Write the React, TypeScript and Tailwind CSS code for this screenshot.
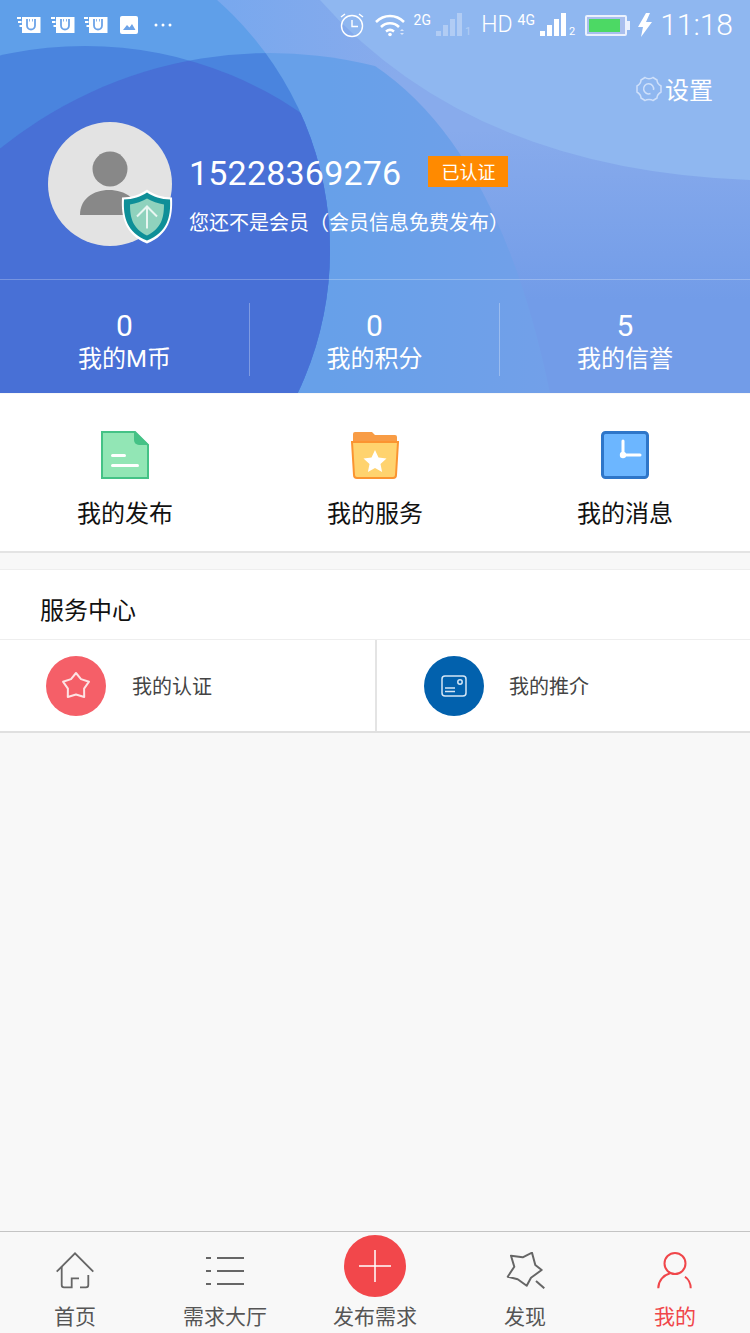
import React from "react";

const cjk = { fontFamily: '"Noto Sans CJK SC", "Noto Sans", sans-serif' };
const rb = { fontFamily: 'Roboto, "Noto Sans CJK SC", sans-serif' };
const bPath = "M-50 196 A430 430 0 0 1 375 66 Q 500 150 550 393 H-50 Z";

function HeaderBg() {
  return (
    <svg className="absolute inset-0" width="750" height="393" viewBox="0 0 750 393">
      <defs>
        <clipPath id="a"><circle cx="-3" cy="250" r="333" /></clipPath>
        <clipPath id="c"><circle cx="85" cy="428" r="382" /></clipPath>
        <linearGradient id="base" x1="0" y1="130" x2="0" y2="300" gradientUnits="userSpaceOnUse">
          <stop offset="0" stopColor="#88abec" />
          <stop offset="1" stopColor="#729ce8" />
        </linearGradient>
        <linearGradient id="band" x1="220" y1="0" x2="400" y2="0" gradientUnits="userSpaceOnUse">
          <stop offset="0" stopColor="#78a8ee" />
          <stop offset="1" stopColor="#88abec" />
        </linearGradient>
        <linearGradient id="bb" x1="330" y1="0" x2="550" y2="0" gradientUnits="userSpaceOnUse">
          <stop offset="0" stopColor="#67a0e9" />
          <stop offset="1" stopColor="#72a0e9" />
        </linearGradient>
      </defs>
      <rect width="750" height="393" fill="url(#base)" />
      <rect x="200" y="0" width="220" height="131" fill="url(#band)" />
      <path d="M320 0 Q 470 170 750 180 V0 Z" fill="#8fb7f0" />
      <path d={bPath} fill="url(#bb)" />
      <circle cx="-3" cy="250" r="333" fill="#5f9fe9" />
      <g clipPath="url(#a)">
        <circle cx="85" cy="428" r="382" fill="#4a84de" />
        <path d={bPath} fill="#4a84de" />
        <g clipPath="url(#c)">
          <path d={bPath} fill="#4870d6" />
        </g>
      </g>
    </svg>
  );
}

function Magnet() {
  return (
    <svg width="24" height="18" viewBox="0 0 24 18">
      <path d="M5 1h18.500v16H5z" fill="#fff" />
      <path d="M0 1h4v2H0zM1 5h3.500v2H1zM2.500 9h2.500v2H2.500z" fill="#fff" />
      <path d="M10 3v6.500a4 4 0 0 0 8 0V3" fill="none" stroke="#6ca3e8" strokeWidth="1.800" />
      <path d="M12.500 3v2.500M15.500 3v2.500" fill="none" stroke="#6ca3e8" strokeWidth="0.800" />
    </svg>
  );
}

function Bars({ n, dim }: { n: string; dim?: boolean }) {
  return (
    <div className={`flex items-end h-[24px] gap-[1px] ${dim ? "opacity-30" : ""}`}>
      <svg width="27" height="24" viewBox="0 0 27 24" fill="#fff">
        <rect x="0" y="18" width="5" height="5" />
        <rect x="7" y="12" width="5" height="11" />
        <rect x="14" y="6" width="5" height="17" />
        <rect x="21" y="0" width="5" height="23" />
      </svg>
      <span className="text-[11px] leading-[11px] text-white ml-[1px]" style={rb}>{n}</span>
    </div>
  );
}

function StatusBar() {
  return (
    <div className="h-[50px] flex items-center justify-between pl-[17px] pr-[17px] text-white relative" style={rb}>
      <div className="flex items-center">
        <div className="flex items-center gap-[9.500px]"><Magnet /><Magnet /><Magnet /></div>
        <svg className="ml-[12px]" width="18" height="18" viewBox="0 0 18 18">
          <rect width="18" height="18" rx="2" fill="#fff" />
          <path d="M3 14l4-5 2.500 2.500L12 8l3.500 6z" fill="#6ca3e8" />
        </svg>
        <svg className="ml-[16px]" width="18" height="4" viewBox="0 0 18 4" fill="#fff">
          <circle cx="2" cy="2" r="1.500" /><circle cx="9" cy="2" r="1.500" /><circle cx="16" cy="2" r="1.500" />
        </svg>
      </div>
      <div className="flex items-center">
        <svg width="24" height="26" viewBox="0 0 24 26" fill="none" stroke="#fff" strokeWidth="1.400">
          <circle cx="12" cy="14" r="10.500" />
          <path d="M12 8v6.500h6" />
          <path d="M1 5l4-3M23 5l-4-3" />
        </svg>
        <svg className="ml-[11px]" width="32" height="24" viewBox="0 0 32 24" fill="none" stroke="#fff" strokeWidth="2.500">
          <path d="M1 9c8-8 20-8 28 0" />
          <path d="M6 14c5-5 13-5 18 0" />
          <path d="M11 18.500c2.500-2 5.500-2 8 0" />
          <circle cx="15" cy="21.500" r="1.800" fill="#fff" stroke="none" />
          <path d="M25 18l2-2 2 2zM25 20l2 2 2-2z" fill="#dbe6fa" stroke="none" />
        </svg>
        <span className="ml-[7px] self-start mt-[4px] text-[14px] leading-[14px]">2G</span>
        <div className="ml-[5px]"><Bars n="1" dim /></div>
        <span className="ml-[10px] text-[23px] leading-[24px] font-light">HD</span>
        <span className="ml-[5px] self-start mt-[4px] text-[14px] leading-[14px]">4G</span>
        <div className="ml-[5px]"><Bars n="2" /></div>
        <div className="ml-[10px] flex items-center">
          <div className="w-[42px] h-[21px] border-2 border-[#eaf1fd] rounded-[2px] p-[2px] bg-[#a9bfee]">
            <div className="w-[31px] h-full bg-[#4cd964]" />
          </div>
          <div className="w-[3px] h-[9px] bg-[#eaf1fd]" />
        </div>
        <svg className="ml-[8px]" width="14" height="24" viewBox="0 0 14 24" fill="#fff">
          <path d="M8 0L0 14h5l-2 10 11-15H8l4-9z" />
        </svg>
        <span className="ml-[8px] text-[30px] leading-[32px] font-light">11:18</span>
      </div>
    </div>
  );
}

function Avatar() {
  return (
    <div className="relative w-[124px] h-[124px] shrink-0 rounded-full bg-[#e3e3e3]">
      <svg className="absolute left-[31px] top-[29px]" width="60" height="65" viewBox="0 0 60 65" fill="#888">
        <circle cx="31" cy="18" r="17.500" />
        <path d="M1 64c0-16 13-25 29-25s30 9 30 25z" />
      </svg>
      <svg className="absolute left-[73px] top-[66px]" width="52" height="57" viewBox="0 0 52 56">
        <path d="M26 1c6 5 16 8 25 8 1 20-3 37-25 46C4 46 0 29 1 9c9 0 19-3 25-8z" fill="#fff" />
        <path d="M26 4c6 4 14 7 23 7 1 18-3 33-23 41C6 44 2 29 3 11c9 0 17-3 23-7z" fill="#0e8f98" />
        <path d="M26 10c5 3 11 5 17 6 0 14-3 24-17 31-14-7-17-17-17-31 6-1 12-3 17-6z" fill="#8fd2bd" />
        <path d="M16 28l10-10 10 10M26 19v21" fill="none" stroke="#e8f6f1" strokeWidth="2" />
      </svg>
    </div>
  );
}

function Stat({ v, l, border, w }: { v: string; l: string; border?: boolean; w: string }) {
  return (
    <div className={`${w} h-[73px] pt-[6px] flex flex-col items-center justify-center text-white ${border ? "border-r border-white/30" : ""}`}>
      <span className="text-[30px] leading-[32px]" style={rb}>{v}</span>
      <span className="text-[24px] leading-[34px]" style={rb}>{l}</span>
    </div>
  );
}

function DocIcon() {
  return (
    <svg width="48" height="48" viewBox="0 0 48 48">
      <path d="M1 1h33l13 13v33H1z" fill="#92e6b5" stroke="#45c286" strokeWidth="2" />
      <path d="M33 0l15 14H38a5 5 0 0 1-5-5z" fill="#45c286" />
      <rect x="10" y="23" width="15" height="3" rx="1.500" fill="#fff" />
      <rect x="10" y="33" width="28" height="3" rx="1.500" fill="#fff" />
    </svg>
  );
}

function FolderIcon() {
  return (
    <svg width="48" height="48" viewBox="0 0 48 48">
      <path d="M2 10V3a2 2 0 0 1 2-2h17l3 3h20a2 2 0 0 1 2 2v6H2z" fill="#f89c45" />
      <path d="M1 11h46l-2 33a3 3 0 0 1-3 3H6a3 3 0 0 1-3-3z" fill="#ffd36e" stroke="#fb9430" strokeWidth="2" />
      <path d="M24 19l3.500 7.500 8 1-6 5.500 1.600 8-7.100-4-7.100 4 1.600-8-6-5.500 8-1z" fill="#fff" />
    </svg>
  );
}

function ClockIcon() {
  return (
    <svg width="48" height="48" viewBox="0 0 48 48">
      <rect x="1.500" y="1.500" width="45" height="45" rx="3" fill="#6cb6ff" stroke="#2e76c9" strokeWidth="3" />
      <path d="M22 10v14h17" fill="none" stroke="#fff" strokeWidth="3" strokeLinecap="round" />
      <circle cx="22" cy="24" r="3.200" fill="#fff" />
    </svg>
  );
}

function Action({ icon, label }: { icon: React.ReactNode; label: string }) {
  return (
    <div className="flex-1 flex flex-col items-center pt-[37px]">
      {icon}
      <span className="mt-[16px] text-[24px] leading-[34px] text-[#111]" style={cjk}>{label}</span>
    </div>
  );
}

function NavItem({ icon, label, active }: { icon: React.ReactNode; label: string; active?: boolean }) {
  return (
    <div className="flex-1 flex flex-col items-center">
      <div className="h-[58px] flex items-end pb-[1px]">{icon}</div>
      <span className={`mt-[10px] text-[21px] leading-[30px] ${active ? "text-[#f0464a]" : "text-[#555]"}`} style={cjk}>{label}</span>
    </div>
  );
}

export default function App() {
  return (
    <div className="w-[750px] h-[1333px] flex flex-col bg-[#f8f8f8] overflow-hidden" style={cjk}>
      <div className="relative h-[393px] shrink-0 overflow-hidden">
        <HeaderBg />
        <div className="relative h-full flex flex-col">
          <StatusBar />
          <div className="h-[72px] flex justify-end items-center pr-[37px] text-white pt-[5px]">
            <svg width="26" height="26" viewBox="0 0 26 26" fill="none" stroke="#cfe0fa" strokeWidth="1.500">
              <path d="M9 1.500c2 1.500 6 1.500 8 0l4 2.500c0 2.500 1.500 4.500 4 6v6c-2.500 1.500-4 3.500-4 6l-4 2.500c-2-1.500-6-1.500-8 0L5 22c0-2.500-1.500-4.500-4-6v-6c2.500-1.500 4-3.500 4-6z" />
              <path d="M17.500 14a5 5 0 1 0-3 3.500" />
            </svg>
            <span className="ml-[3px] text-[24px] leading-[30px]">设置</span>
          </div>
          <div className="flex pl-[48px] items-start">
            <Avatar />
            <div className="ml-[17px] mt-[31px] text-white">
              <div className="flex items-center h-[40px]">
                <span className="text-[34px] leading-[40px] tracking-[0.2px]" style={rb}>15228369276</span>
                <span className="ml-[27px] mb-[4px] w-[80px] h-[31px] bg-[#ff8a00] flex items-center justify-center text-[18px] leading-[31px]" style={cjk}>已认证</span>
              </div>
              <div className="mt-[14px] text-[20px] leading-[30px] whitespace-nowrap" style={cjk}>您还不是会员（会员信息免费发布）</div>
            </div>
          </div>
          <div className="mt-[33px] border-t border-white/25 pt-[23px] flex">
            <Stat w="w-[250px]" v="0" l="我的M币" border />
            <Stat w="w-[250px]" v="0" l="我的积分" border />
            <Stat w="w-[250px]" v="5" l="我的信誉" />
          </div>
        </div>
      </div>

      <div className="h-[159px] shrink-0 bg-white flex border-b-2 border-[#e4e4e4] mt-[1px]">
        <Action icon={<DocIcon />} label="我的发布" />
        <Action icon={<FolderIcon />} label="我的服务" />
        <Action icon={<ClockIcon />} label="我的消息" />
      </div>

      <div className="mt-[16px] bg-white border-t border-[#eee] shrink-0">
        <div className="h-[70px] pl-[40px] pt-[8px] flex items-center text-[24px] text-[#111] border-b border-[#eee]">服务中心</div>
        <div className="h-[93px] flex border-b-2 border-[#e0e0e0]">
          <div className="w-[377px] border-r-2 border-[#e4e4e4] flex items-center pl-[46px]">
            <div className="w-[60px] h-[60px] rounded-full bg-[#f55f68] flex items-center justify-center">
              <svg width="32" height="32" viewBox="0 0 32 32" fill="none" stroke="#fde3e4" strokeWidth="2" strokeLinejoin="round">
                <path d="M16 3L21 9.100L29 11.700L24.100 18.600L24.200 27L16 24.500L7.800 27L7.900 18.600L3 11.700L11 9.100Z" />
              </svg>
            </div>
            <span className="ml-[26px] text-[20px] text-[#444]">我的认证</span>
          </div>
          <div className="flex-1 flex items-center pl-[47px]">
            <div className="w-[60px] h-[60px] rounded-full bg-[#0261ad] flex items-center justify-center">
              <svg width="26" height="22" viewBox="0 0 26 22" fill="none" stroke="#d5e6f5" strokeWidth="1.500">
                <rect x="1" y="1" width="24" height="20" rx="3" />
                <circle cx="19" cy="7" r="2.200" />
                <path d="M4 13h10M4 16.500h10" />
              </svg>
            </div>
            <span className="ml-[25px] text-[20px] text-[#444]">我的推介</span>
          </div>
        </div>
      </div>

      <div className="flex-1" />

      <div className="h-[102px] shrink-0 border-t border-[#c4c4c4] flex relative">
        <NavItem
          label="首页"
          icon={
            <svg width="38" height="37" viewBox="0 0 38 37" fill="none" stroke="#666" strokeWidth="1.800">
              <path d="M0.700 19.700L19 1.300l18.300 18.400" />
              <path d="M5.700 14.700V33a2.300 2.300 0 0 0 2.300 2.300h7.700v-9h7.300" />
              <path d="M32.300 23v10a2.300 2.300 0 0 1-2.300 2.300h-6" />
            </svg>
          }
        />
        <NavItem
          label="需求大厅"
          icon={
            <svg width="38" height="28" viewBox="0 0 38 28" fill="none" stroke="#666" strokeWidth="2" className="mb-[4px]">
              <path d="M0 1h5M11 1h27M0 14h5M11 14h27M0 27h5M11 27h27" />
            </svg>
          }
        />
        <div className="flex-1 flex flex-col items-center">
          <div className="mt-[3px] w-[62px] h-[62px] rounded-full bg-[#f2474b] flex items-center justify-center">
            <svg width="32" height="32" viewBox="0 0 32 32" stroke="#fff" strokeWidth="1.500"><path d="M0 16h32M16 0v32" /></svg>
          </div>
          <span className="mt-[3px] text-[21px] leading-[30px] text-[#555]">发布需求</span>
        </div>
        <NavItem
          label="发现"
          icon={
            <svg width="39" height="37" viewBox="0 0 39 37" fill="none" stroke="#666" strokeWidth="2" strokeLinejoin="round">
              <path d="M5 3.700L16.700 5.300L26 0.700L29.300 13L35.700 18L25 25.700L20.700 33.700L11.700 27.300L1.700 24.700L8.300 14.700Z" />
              <path d="M30 29L38.300 36.300" />
            </svg>
          }
        />
        <NavItem
          active
          label="我的"
          icon={
            <svg width="36" height="37" viewBox="0 0 36 37" fill="none" stroke="#f0464a" strokeWidth="2">
              <circle cx="18" cy="11.500" r="10.500" />
              <path d="M1.300 36.300C1.300 29 6 23.500 13 21.300M28 24.700c3.500 2.500 5.700 6.500 5.700 11.600" />
            </svg>
          }
        />
      </div>
    </div>
  );
}
